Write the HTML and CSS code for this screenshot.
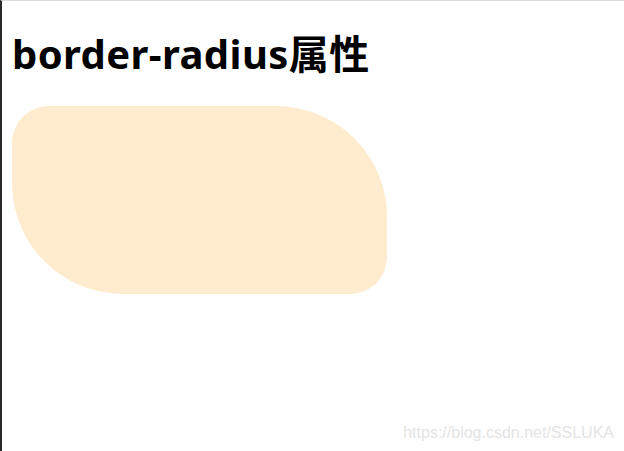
FILE: index.html
```html
<!DOCTYPE html>
<html lang="zh-CN">
<head>
<meta charset="utf-8">
<title>border-radius属性</title>
<link rel="stylesheet" href="styles.css">
</head>
<body>
<div class="frame">
  <h1 class="title">border-radius属性</h1>
  <div class="shape"></div>
</div>
<div class="watermark">https://blog.csdn.net/SSLUKA</div>
</body>
</html>
```
FILE: styles.css
```css
html, body {
  margin: 0;
  padding: 0;
  height: 100%;
  background: #ffffff;
}
.frame {
  box-sizing: border-box;
  height: 451px;
  border-left: 2px solid #2a2a2a;
  border-top: 1px solid #dcdcdc;
  padding: 27px 10px 0 10px;
  overflow: hidden;
}
.title {
  margin: 0 0 26px 0;
  font-family: "Noto Sans", "Noto Sans CJK SC", sans-serif;
  font-weight: 700;
  font-size: 40px;
  line-height: 52px;
  color: #000000;
  letter-spacing: 0.4px;
}
.shape {
  width: 375px;
  height: 188px;
  background: #ffebcd;
  border-radius: 37px 111px;
}
.watermark {
  position: absolute;
  right: 10px;
  bottom: 9px;
  font-family: "Liberation Sans", Arial, sans-serif;
  font-size: 16px;
  color: #e4e4e4;
}
```
